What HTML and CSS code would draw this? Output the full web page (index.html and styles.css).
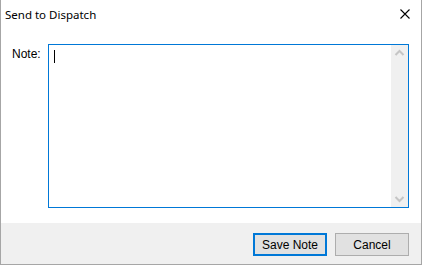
FILE: index.html
```html
<!DOCTYPE html>
<html>
<head>
<meta charset="utf-8">
<link rel="stylesheet" href="styles.css">
</head>
<body>
<div class="window">
  <div class="titlebar">
    <span class="title">Send to Dispatch</span>
    <svg class="close" width="10" height="10" viewBox="0 0 10 10"><path d="M0.5 0.5 L9.5 9.5 M9.5 0.5 L0.5 9.5" stroke="#000" stroke-width="1.1" fill="none"/></svg>
  </div>
  <div class="main">
    <label class="label">Note:</label>
    <div class="textbox">
      <div class="text"><span class="caret"></span></div>
      <div class="scrollbar">
        <svg class="arrow" width="17" height="17" viewBox="0 0 17 17"><path d="M4.5 10 L8.5 6 L12.5 10" stroke="#c5c5c5" stroke-width="2" fill="none"/></svg>
        <svg class="arrow" width="17" height="17" viewBox="0 0 17 17"><path d="M4.5 7 L8.5 11 L12.5 7" stroke="#c5c5c5" stroke-width="2" fill="none"/></svg>
      </div>
    </div>
  </div>
  <div class="footer">
    <button class="btn primary">Save Note</button>
    <button class="btn">Cancel</button>
  </div>
</div>
</body>
</html>
```
FILE: styles.css
```css
html, body {
  margin: 0;
  padding: 0;
  background: #ffffff;
}
.window {
  width: 422px;
  height: 265px;
  box-sizing: border-box;
  border-left: 1px solid #a6a6a6;
  border-right: 1px solid #a6a6a6;
  border-bottom: 1px solid #a6a6a6;
  display: flex;
  flex-direction: column;
  background: #ffffff;
  font-family: "Liberation Sans", Arial, sans-serif;
  font-size: 12px;
  color: #000;
}
.titlebar {
  height: 30px;
  display: flex;
  align-items: center;
  justify-content: space-between;
  padding: 0 11px 0 4px;
}
.title {
  font-family: "Noto Sans", "Open Sans", sans-serif;
  font-size: 11.5px;
  color: #000;
  margin-top: -1px;
}
.close {
  display: block;
  margin-top: -2px;
}
.main {
  height: 193px;
  box-sizing: border-box;
  display: flex;
  padding: 14px 12px 15px 11px;
}
.label {
  width: 36px;
  padding-top: 3px;
  line-height: 14px;
}
.textbox {
  flex: 1;
  border: 1px solid #0078d7;
  display: flex;
}
.text {
  flex: 1;
  padding: 5px 0 0 5px;
}
.caret {
  display: block;
  width: 1px;
  height: 13px;
  background: #000;
}
.scrollbar {
  width: 17px;
  background: #f0f0f0;
  display: flex;
  flex-direction: column;
  justify-content: space-between;
}
.arrow {
  display: block;
}
.footer {
  flex: 1;
  background: #f0f0f0;
  display: flex;
  justify-content: flex-end;
  align-items: flex-start;
  gap: 8px;
  padding: 10px 12px 0 0;
}
.btn {
  width: 74px;
  height: 23px;
  box-sizing: border-box;
  margin: 0;
  padding: 0;
  background: #e1e1e1;
  border: 1px solid #adadad;
  font-family: "Liberation Sans", Arial, sans-serif;
  font-size: 12px;
  color: #000;
  border-radius: 0;
}
.btn.primary {
  border: 2px solid #0078d7;
}
```
